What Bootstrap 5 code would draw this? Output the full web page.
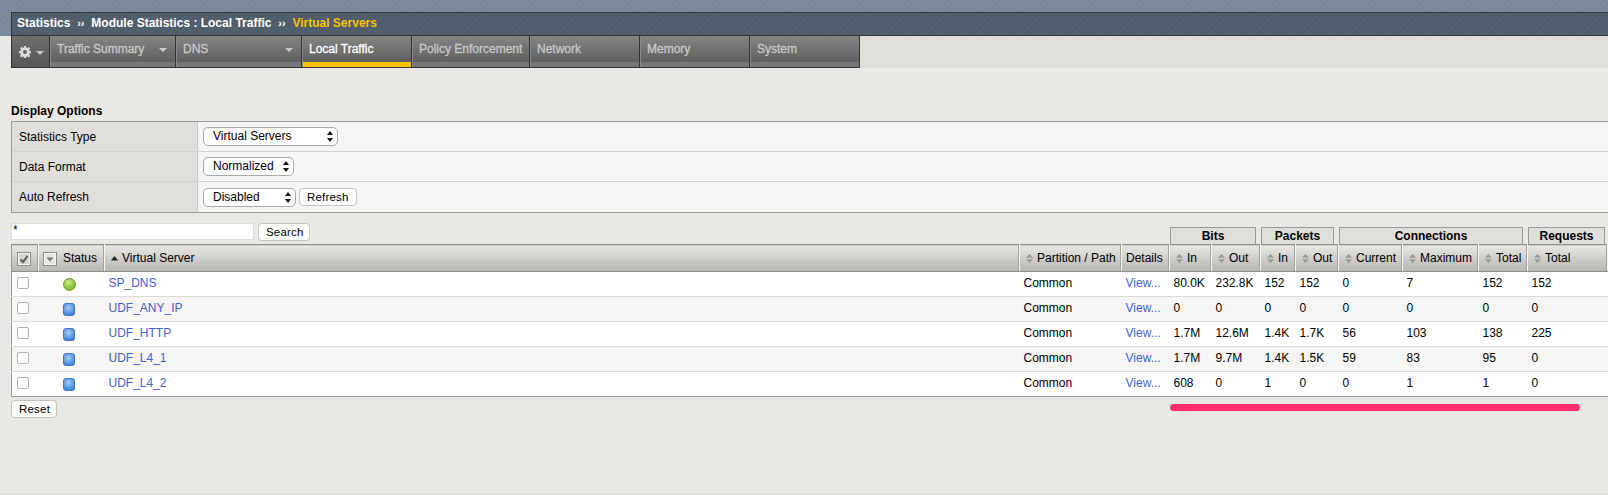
<!DOCTYPE html>
<html lang="en">
<head>
    <meta charset="UTF-8">
    <title>Statistics - Virtual Servers</title>
    <link href="https://cdn.jsdelivr.net/npm/bootstrap@5.3.0/dist/css/bootstrap.min.css" rel="stylesheet">
    <style>
        body {
            background: #e9e8e4;
            font-family: "Liberation Sans", Arial, sans-serif;
            font-size: 12px;
            color: #000;
            height: 495px;
            overflow: hidden;
        }

        /* header */
        #topBand {
            height: 36px;
            padding: 12px 0 0 11px;
            background: repeating-linear-gradient(135deg, #7b8b9d 0 2px, #77879a 2px 4px);
        }
        #crumbs {
            height: 24px;
            background: repeating-linear-gradient(135deg, #53606e 0 2px, #4f5c6a 2px 4px);
            border: 1px solid #333;
            border-right: 0;
            padding-left: 5px;
            line-height: 21px;
            font-weight: bold;
            color: #fff;
        }
        #crumbs .sep { margin: 0 3.5px; font-size: 11px; }
        #crumbs .here { color: #f5c400; }

        #menuStrip { height: 32px; background: #dfded9; margin-left: 11px; }
        .tab-item {
            height: 32px;
            border-left: 1px solid #333;
            border-bottom: 1px solid #333;
            background: linear-gradient(#858585, #5f5f5f 26px, #777 26px);
            box-shadow: inset 1px 0 0 #8a8a8a;
            color: #c9c9c9;
            padding: 4px 0 0 7px;
            position: relative;
            -webkit-text-stroke: .3px;
            white-space: nowrap;
        }
        .tab-item.on {
            color: #fff;
            background: linear-gradient(#858585, #5f5f5f 26px, #f5c400 26px);
        }
        .tab-item.last { border-right: 1px solid #333; width: 111px; }
        .drop-tri {
            position: absolute;
            right: 8px;
            top: 12px;
            border: 4px solid transparent;
            border-top: 4px solid #c9c9c9;
            border-bottom: 0;
        }
        #gearTab {
            width: 38px;
            padding: 10px 0 0 7px;
            background: linear-gradient(#6e6e6e, #565656);
            box-shadow: none;
        }
        #gearTab svg { display: block; }
        #gearTab .drop-tri { right: 5px; top: 15px; }
        .w-traffic { width: 126px; }
        .w-dns { width: 126px; }
        .w-local { width: 110px; }
        .w-policy { width: 118px; }
        .w-other { width: 110px; }

        /* display options */
        #optHead { font-weight: bold; margin: 36px 0 2px 11px; height: 15px; line-height: 15px; }
        #optBox {
            margin-left: 11px;
            border-top: 1px solid #999;
            border-bottom: 1px solid #999;
            border-left: 1px solid #999;
            background: #f6f5f3;
        }
        .opt-row { height: 30px; border-bottom: 1px solid #d3d2ce; }
        .opt-row:last-child { border-bottom: 0; }
        .opt-label {
            width: 186px;
            background: #dfdeda;
            border-right: 1px solid #c9c8c4;
            padding-left: 7px;
        }
        .opt-value { padding-left: 5px; gap: 3px; }

        .fake-select {
            height: 19px;
            background: #fff;
            border: 1px solid #a9a9a9;
            border-radius: 5px;
            padding-left: 9px;
            position: relative;
            line-height: 17px;
        }
        .fake-select::before, .fake-select::after {
            content: "";
            position: absolute;
            right: 4px;
            border: 3px solid transparent;
        }
        .fake-select::before { top: 3px; border-top: 0; border-bottom: 4px solid #111; }
        .fake-select::after { top: 10px; border-bottom: 0; border-top: 4px solid #111; }
        .sel-type { width: 135px; }
        .sel-format { width: 91px; }
        .sel-refresh { width: 93px; }

        .plain-btn {
            height: 18px;
            padding: 0 7px;
            background: #fdfdfc;
            border: 1px solid #c4c3bf;
            border-radius: 4px;
            font-size: 11.5px;
            line-height: 16px;
            color: #000;
            letter-spacing: .2px;
        }

        /* search and group tabs */
        #toolRow { height: 31px; margin: 0 0 0 11px; position: relative; }
        #searchBox {
            width: 243px;
            height: 17px;
            margin: 10px 4px 0 0;
            background: #fff;
            border: 1px solid #dcdbd7;
            line-height: 13px;
            padding-left: 1px;
        }
        #searchBtn { margin-top: 10px; width: 52px; }
        .group-tab {
            height: 17px;
            background: #dfdeda;
            border: 1px solid #999;
            border-bottom: 0;
            font-weight: bold;
            text-align: center;
            line-height: 16px;
            position: absolute;
            bottom: 0;
        }

        /* main table */
        #statTable {
            margin: 0 0 0 11px;
            width: 1597px;
            table-layout: fixed;
            border-collapse: collapse;
            border-left: 1px solid #999;
            border-bottom: 1px solid #999;
        }
        #statTable th {
            height: 27px;
            font-weight: normal;
            background: linear-gradient(#e8e7e3, #b6b5b0);
            border-top: 1px solid #8e8e8e;
            border-bottom: 1px solid #8e8e8e;
            border-right: 1px solid #f6f5f2;
            box-shadow: inset -1px 0 0 #a3a29e;
            padding: 0 0 0 4px;
            white-space: nowrap;
            overflow: hidden;
        }
        #statTable td {
            height: 25px;
            padding: 0 0 2px 4px;
            border-bottom: 1px solid #dbdad6;
            background: #fff;
            white-space: nowrap;
        }
        #statTable tr:nth-child(even) td { background: #f6f5f3; }
        #statTable tbody tr:last-child td { border-bottom: 0; }
        #statTable a { color: #3f5fc9; text-decoration: none; }

        .sort-mark {
            display: inline-block;
            width: 7px;
            height: 9px;
            margin: 0 4px 0 2px;
            vertical-align: -1px;
        }
        .th-details { padding-left: 4px !important; }
        .row-check {
            display: block;
            width: 12px;
            height: 12px;
            margin-left: 1px;
            background: #fff;
            border: 1px solid #b1b0ac;
            border-radius: 2px;
        }
        .head-box {
            display: inline-block;
            width: 14px;
            height: 14px;
            margin-right: 6px;
            vertical-align: middle;
        }
        .head-box.first { margin-left: 1px; margin-right: 0; }
        .status-green, .status-blue {
            display: block;
            width: 13px;
            height: 13px;
            margin: 2px 0 0 20px;
        }
        .status-green {
            border-radius: 50%;
            background: radial-gradient(circle at 40% 30%, #cbe78f, #84bb2f 70%);
            border: 1px solid #6f9f2c;
        }
        .status-blue {
            width: 12px;
            border-radius: 3px;
            background: radial-gradient(circle at 45% 35%, #a9cdf2, #3f83d8 80%);
            border: 1px solid #3f78c8;
        }

        #resetBtn { margin: 3px 0 0 11px; width: 46px; }

        #pinkLine {
            position: absolute;
            left: 1170px;
            top: 404px;
            width: 410px;
            height: 7px;
            background: #ff2e6e;
            border-radius: 4px;
        }
        #pageEnd {
            position: absolute;
            left: 0;
            right: 0;
            top: 493px;
            border-top: 1px solid #dddcd8;
        }
    </style>
</head>
<body>
    <div id="topBand">
        <div id="crumbs">Statistics <span class="sep">››</span> Module Statistics : Local Traffic <span class="sep">››</span> <span class="here">Virtual Servers</span></div>
    </div>

    <div id="menuStrip" class="d-flex">
        <div id="gearTab" class="tab-item">
            <svg width="12" height="12" viewBox="0 0 16 16" fill="#dcdcdc"><path d="M6.6 0h2.8l.4 2.3 1.2.5 1.9-1.4 2 2-1.4 1.9.5 1.2 2.3.4v2.8l-2.3.4-.5 1.2 1.4 1.9-2 2-1.9-1.4-1.2.5-.4 2.3H6.6l-.4-2.3-1.2-.5-1.9 1.4-2-2 1.4-1.9-.5-1.2L0 9.4V6.6l2.3-.4.5-1.2L1.4 3.1l2-2L5.3 2.8l1.2-.5zM8 5.4A2.6 2.6 0 1 0 8 10.6 2.6 2.6 0 0 0 8 5.4z" fill-rule="evenodd"/></svg>
            <span class="drop-tri"></span>
        </div>
        <div class="tab-item w-traffic">Traffic Summary<span class="drop-tri"></span></div>
        <div class="tab-item w-dns">DNS<span class="drop-tri"></span></div>
        <div class="tab-item w-local on">Local Traffic</div>
        <div class="tab-item w-policy">Policy Enforcement</div>
        <div class="tab-item w-other">Network</div>
        <div class="tab-item w-other">Memory</div>
        <div class="tab-item last">System</div>
    </div>

    <div id="optHead">Display Options</div>
    <div id="optBox">
        <div class="opt-row d-flex">
            <div class="opt-label d-flex align-items-center">Statistics Type</div>
            <div class="opt-value d-flex align-items-center"><div class="fake-select sel-type">Virtual Servers</div></div>
        </div>
        <div class="opt-row d-flex">
            <div class="opt-label d-flex align-items-center">Data Format</div>
            <div class="opt-value d-flex align-items-center"><div class="fake-select sel-format">Normalized</div></div>
        </div>
        <div class="opt-row d-flex">
            <div class="opt-label d-flex align-items-center">Auto Refresh</div>
            <div class="opt-value d-flex align-items-center">
                <div class="fake-select sel-refresh">Disabled</div>
                <button class="plain-btn" type="button">Refresh</button>
            </div>
        </div>
    </div>

    <div id="toolRow" class="d-flex">
        <div id="searchBox">*</div>
        <button id="searchBtn" class="plain-btn" type="button">Search</button>
        <div class="group-tab" style="left:1159px;width:86px">Bits</div>
        <div class="group-tab" style="left:1250px;width:73px">Packets</div>
        <div class="group-tab" style="left:1328px;width:184px">Connections</div>
        <div class="group-tab" style="left:1517px;width:77px">Requests</div>
    </div>

    <table id="statTable">
        <colgroup>
            <col style="width:27px"><col style="width:66px"><col style="width:915px">
            <col style="width:102px"><col style="width:48px"><col style="width:42px">
            <col style="width:49px"><col style="width:35px"><col style="width:43px">
            <col style="width:64px"><col style="width:76px"><col style="width:49px"><col>
        </colgroup>
        <thead>
            <tr>
                <th><svg class="head-box first" viewBox="0 0 14 14"><rect x=".5" y=".5" width="13" height="13" fill="#d6d5d1" stroke="#8c8c8c"/><rect x="1.5" y="1.5" width="11" height="11" fill="none" stroke="#f4f4f2"/><path d="M3.5 7.5l2.5 2.7 4.5-6.4" fill="none" stroke="#5e5e5e" stroke-width="2"/></svg></th>
                <th><svg class="head-box" viewBox="0 0 14 14"><rect x=".5" y=".5" width="13" height="13" fill="#e6e5e2" stroke="#8c8c8c"/><rect x="1.5" y="1.5" width="11" height="11" fill="none" stroke="#f8f8f6"/><path d="M3.5 5.5h7L7 9.5z" fill="#777"/></svg>Status</th>
                <th><svg class="sort-mark" viewBox="0 0 7 9"><path d="M0 6.5L3.5 2 7 6.5z" fill="#222"/></svg>Virtual Server</th>
                <th><svg class="sort-mark" viewBox="0 0 7 9"><path d="M0 3.7L3.5 0 7 3.7zM0 5.3L3.5 9 7 5.3z" fill="#9a9995"/></svg>Partition / Path</th>
                <th class="th-details">Details</th>
                <th><svg class="sort-mark" viewBox="0 0 7 9"><path d="M0 3.7L3.5 0 7 3.7zM0 5.3L3.5 9 7 5.3z" fill="#9a9995"/></svg>In</th>
                <th><svg class="sort-mark" viewBox="0 0 7 9"><path d="M0 3.7L3.5 0 7 3.7zM0 5.3L3.5 9 7 5.3z" fill="#9a9995"/></svg>Out</th>
                <th><svg class="sort-mark" viewBox="0 0 7 9"><path d="M0 3.7L3.5 0 7 3.7zM0 5.3L3.5 9 7 5.3z" fill="#9a9995"/></svg>In</th>
                <th><svg class="sort-mark" viewBox="0 0 7 9"><path d="M0 3.7L3.5 0 7 3.7zM0 5.3L3.5 9 7 5.3z" fill="#9a9995"/></svg>Out</th>
                <th><svg class="sort-mark" viewBox="0 0 7 9"><path d="M0 3.7L3.5 0 7 3.7zM0 5.3L3.5 9 7 5.3z" fill="#9a9995"/></svg>Current</th>
                <th><svg class="sort-mark" viewBox="0 0 7 9"><path d="M0 3.7L3.5 0 7 3.7zM0 5.3L3.5 9 7 5.3z" fill="#9a9995"/></svg>Maximum</th>
                <th><svg class="sort-mark" viewBox="0 0 7 9"><path d="M0 3.7L3.5 0 7 3.7zM0 5.3L3.5 9 7 5.3z" fill="#9a9995"/></svg>Total</th>
                <th><svg class="sort-mark" viewBox="0 0 7 9"><path d="M0 3.7L3.5 0 7 3.7zM0 5.3L3.5 9 7 5.3z" fill="#9a9995"/></svg>Total</th>
            </tr>
        </thead>
        <tbody>
            <tr><td><span class="row-check"></span></td><td><span class="status-green"></span></td><td><a href="#">SP_DNS</a></td><td>Common</td><td><a href="#">View...</a></td><td>80.0K</td><td>232.8K</td><td>152</td><td>152</td><td>0</td><td>7</td><td>152</td><td>152</td></tr>
            <tr><td><span class="row-check"></span></td><td><span class="status-blue"></span></td><td><a href="#">UDF_ANY_IP</a></td><td>Common</td><td><a href="#">View...</a></td><td>0</td><td>0</td><td>0</td><td>0</td><td>0</td><td>0</td><td>0</td><td>0</td></tr>
            <tr><td><span class="row-check"></span></td><td><span class="status-blue"></span></td><td><a href="#">UDF_HTTP</a></td><td>Common</td><td><a href="#">View...</a></td><td>1.7M</td><td>12.6M</td><td>1.4K</td><td>1.7K</td><td>56</td><td>103</td><td>138</td><td>225</td></tr>
            <tr><td><span class="row-check"></span></td><td><span class="status-blue"></span></td><td><a href="#">UDF_L4_1</a></td><td>Common</td><td><a href="#">View...</a></td><td>1.7M</td><td>9.7M</td><td>1.4K</td><td>1.5K</td><td>59</td><td>83</td><td>95</td><td>0</td></tr>
            <tr><td><span class="row-check"></span></td><td><span class="status-blue"></span></td><td><a href="#">UDF_L4_2</a></td><td>Common</td><td><a href="#">View...</a></td><td>608</td><td>0</td><td>1</td><td>0</td><td>0</td><td>1</td><td>1</td><td>0</td></tr>
        </tbody>
    </table>

    <button id="resetBtn" class="plain-btn" type="button">Reset</button>

    <div id="pinkLine"></div>
    <div id="pageEnd"></div>

    <script src="https://cdn.jsdelivr.net/npm/bootstrap@5.3.0/dist/js/bootstrap.bundle.min.js"></script>
</body>
</html>
